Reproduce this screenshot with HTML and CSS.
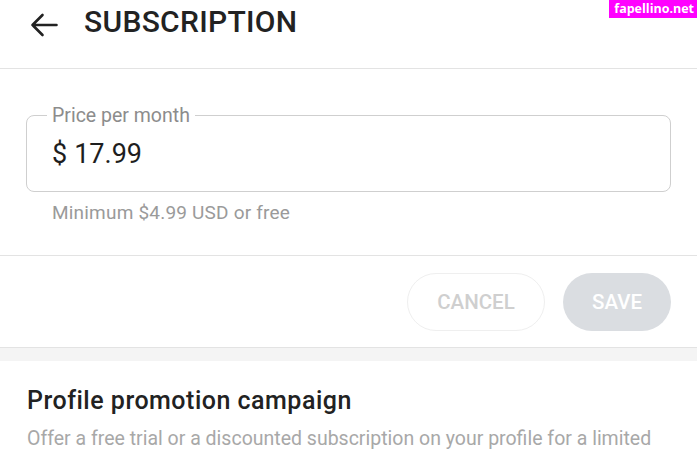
FILE: index.html
```html
<!DOCTYPE html>
<html>
<head>
<meta charset="utf-8">
<link rel="stylesheet" href="styles.css">
</head>
<body>
<div class="watermark">fapellino.net</div>
<header class="topbar">
  <svg class="back" width="28" height="24" viewBox="0 0 28 24"><path d="M26.5 12H2.5M12.5 2L2.5 12l10 10" fill="none" stroke="#222" stroke-width="2.6" stroke-linecap="round" stroke-linejoin="round"/></svg>
  <h1 class="title">SUBSCRIPTION</h1>
</header>
<section class="price">
  <div class="field">
    <span class="legend">Price per month</span>
    <div class="value"><span class="cur">$</span>17.99</div>
  </div>
  <div class="hint">Minimum $4.99 USD or free</div>
</section>
<div class="actions">
  <button class="btn cancel">CANCEL</button>
  <button class="btn save">SAVE</button>
</div>
<div class="band"></div>
<section class="promo">
  <h2 class="promo-title">Profile promotion campaign</h2>
  <p class="promo-text">Offer a free trial or a discounted subscription on your profile for a limited</p>
</section>
</body>
</html>
```
FILE: styles.css
```css
html, body { margin: 0; padding: 0; background: #fff; }
body { font-family: Roboto, "Noto Sans", sans-serif; width: 697px; height: 450px; overflow: hidden; position: relative; }
.watermark { position: absolute; top: 0; right: 0; background: #f0f; color: #fff; font-family: "Open Sans", sans-serif; font-weight: 700; font-size: 12.5px; line-height: 18px; padding: 0 3px 0 5px; }
.topbar { height: 69px; border-bottom: 1px solid #e3e3e3; display: flex; align-items: flex-start; padding-left: 30px; box-sizing: border-box; }
.back { margin-top: 13px; }
.title { margin: 0 0 0 26px; font-size: 30px; font-weight: 500; color: #222; line-height: 44px; letter-spacing: 0.3px; }
.price { padding: 46px 26px 0 26px; height: 187px; box-sizing: border-box; border-bottom: 1px solid #e3e3e3; }
.field { position: relative; border: 1.5px solid #cfcfcf; border-radius: 8px; height: 77px; box-sizing: border-box; padding: 0 0 0 25px; display: flex; align-items: center; }
.legend { position: absolute; left: 20px; top: -11px; background: #fff; padding: 0 5px 0 5px; font-size: 19.5px; color: #8c8c8c; line-height: 22px; }
.value { font-size: 27px; color: #1e1e1e; line-height: 32px; margin-top: 1px; }
.cur { margin-right: 7px; }
.hint { font-size: 19px; color: #9a9a9a; margin: 10px 0 0 26px; line-height: 22px; letter-spacing: 0.2px; }
.actions { display: flex; justify-content: flex-end; gap: 18px; padding: 17px 26px 0 0; height: 92px; box-sizing: border-box; border-bottom: 1px solid #e3e3e3; }
.btn { height: 58px; border-radius: 29px; font-family: Roboto, sans-serif; font-size: 20.5px; font-weight: 500; padding: 0; }
.cancel { width: 138px; background: #fff; border: 1.5px solid #efefef; color: #cfcfcf; }
.save { width: 108px; background: #dadde1; border: none; color: #fff; }
.band { height: 13px; background: #f4f4f4; }
.promo { padding: 25px 27px 0 27px; }
.promo-title { margin: 0; font-size: 25px; font-weight: 500; color: #222; line-height: 30px; letter-spacing: 0.5px; }
.promo-text { margin: 11px 0 0 0; font-size: 19.5px; color: #a8a8a8; line-height: 24px; letter-spacing: 0; white-space: nowrap; }
```
